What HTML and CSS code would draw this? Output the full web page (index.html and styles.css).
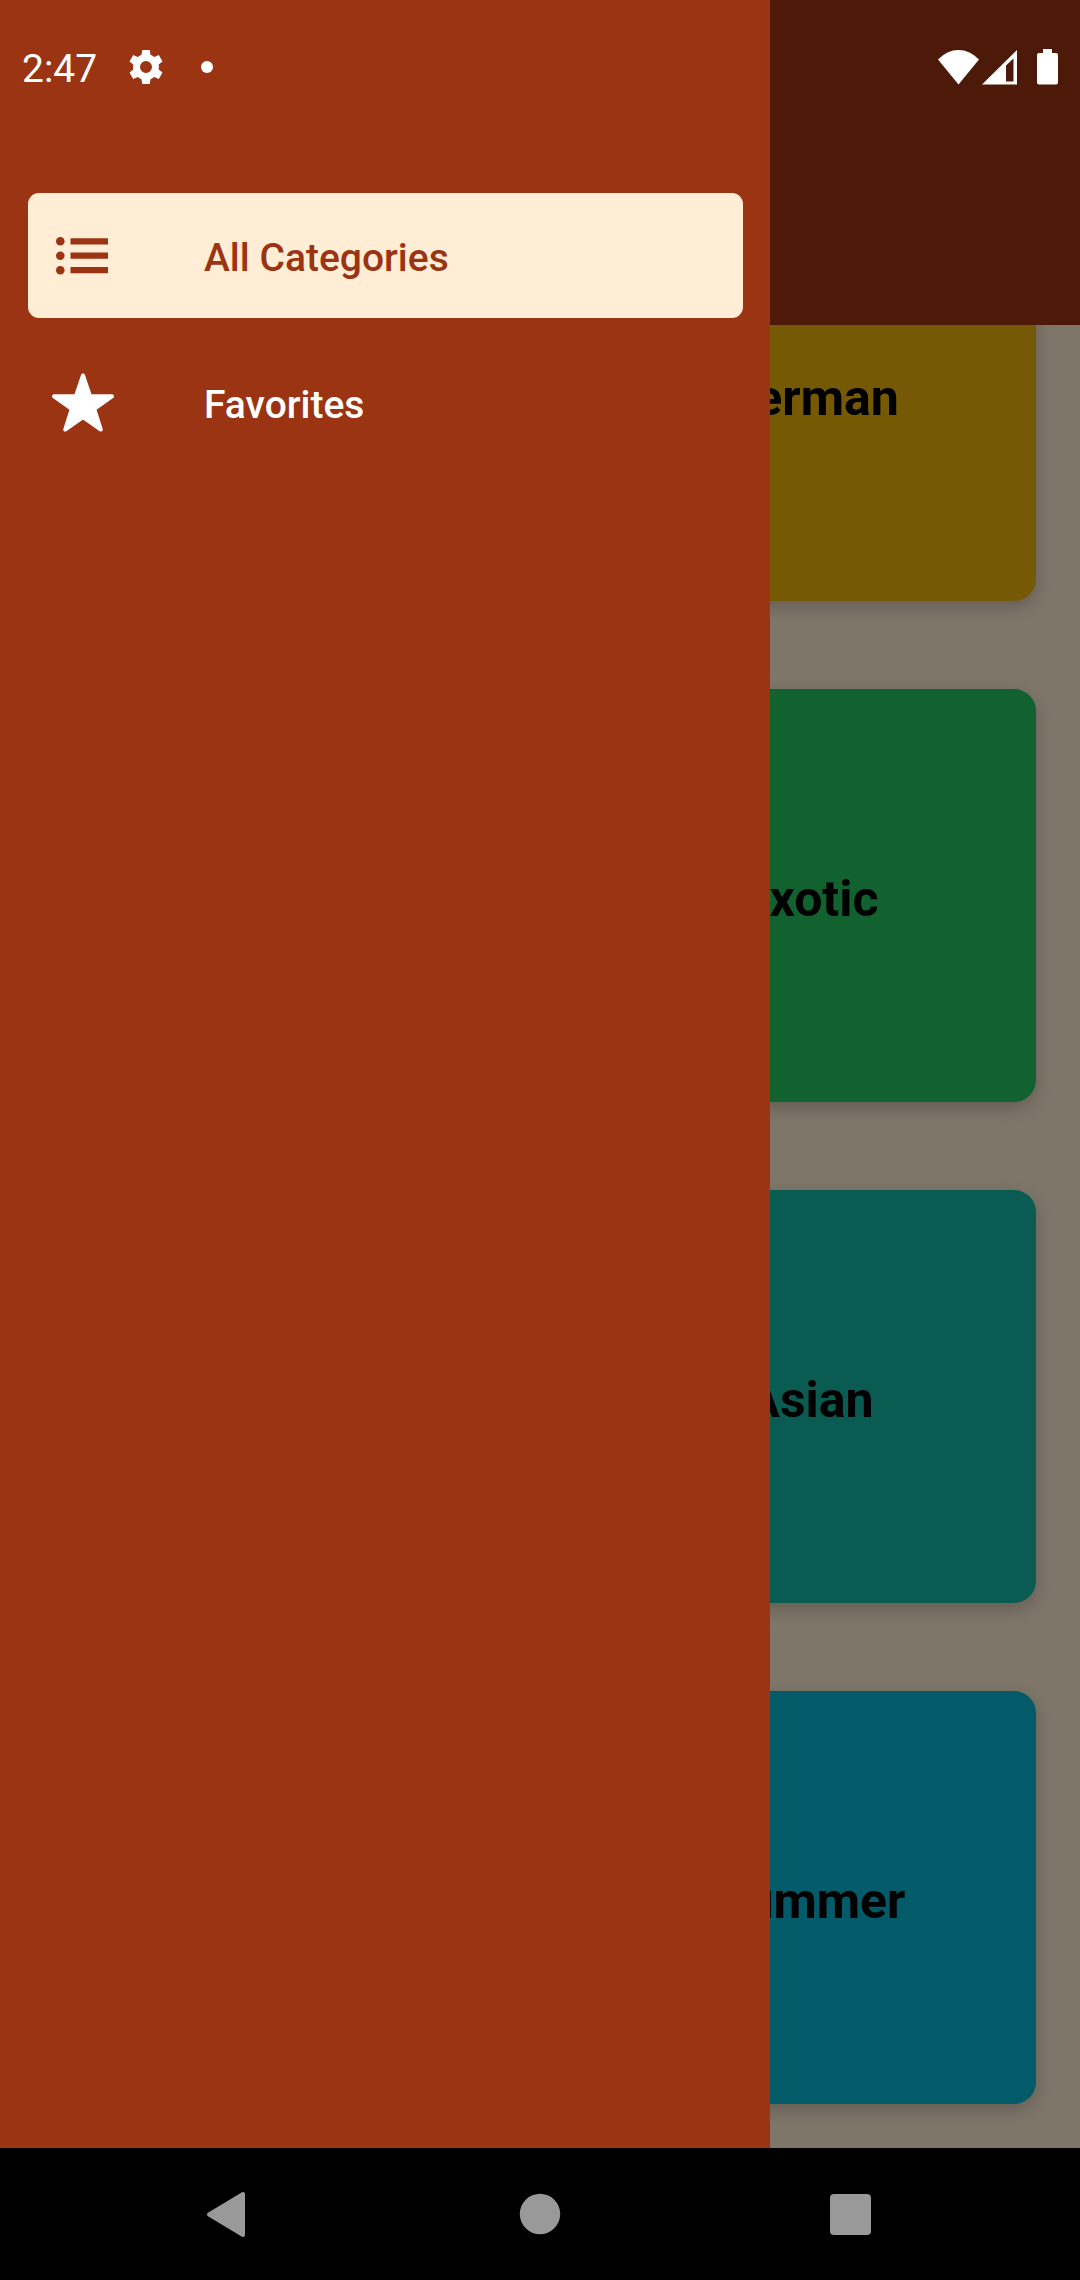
FILE: index.html
```html
<!DOCTYPE html>
<html lang="en">
<head>
<meta charset="utf-8">
<meta name="viewport" content="width=device-width, initial-scale=1">
<title>All Categories</title>
<link rel="stylesheet" href="styles.css">
</head>
<body>
<div class="screen">
  <div class="stage">
    <div class="app">
      <header class="app-header"></header>
      <main class="categories">
        <a class="card card-yellow" href="#german">German</a>
        <a class="card card-green" href="#exotic">Exotic</a>
        <a class="card card-teal" href="#asian">Asian</a>
        <a class="card card-cyan" href="#summer">Summer</a>
      </main>
    </div>
    <div class="scrim"></div>
    <nav class="drawer">
      <a class="drawer-item active" href="#categories">
        <svg class="drawer-icon" viewBox="0 0 66 66" aria-hidden="true">
          <g fill="currentColor">
            <circle cx="10.300" cy="18.300" r="4.300"/><circle cx="10.300" cy="32.700" r="4.300"/><circle cx="10.300" cy="47.200" r="4.300"/>
            <path d="M20.500 15.200H58v6.200H20.500zM20.500 29.600H58v6.200H20.500zM20.500 44.100H58v6.200H20.500z"/>
          </g>
        </svg>
        <span class="drawer-label">All Categories</span>
      </a>
      <a class="drawer-item" href="#favorites">
        <svg class="drawer-icon" viewBox="0 0 66 66" aria-hidden="true">
          <path fill="currentColor" stroke="currentColor" stroke-width="4" stroke-linejoin="round" d="M33 5.500L40.100 26.300H62L44.300 39L50.800 59.500L33 47L15.200 59.500L21.700 39L4 26.300H25.900Z"/>
        </svg>
        <span class="drawer-label">Favorites</span>
      </a>
    </nav>
    <div class="status-bar">
      <span class="clock">2:47</span>
      <svg class="gear" viewBox="0 0 34 34" aria-label="Settings">
        <path fill="#fff" fill-rule="evenodd" d="M13.300 0H20.700L21.500 4.800A13 13 0 0 1 25.200 6.900L29.800 5.100L33.500 11.500L29.700 14.600A13 13 0 0 1 29.700 19.400L33.500 22.500L29.800 28.900L25.200 27.100A13 13 0 0 1 21.500 29.200L20.700 34H13.300L12.500 29.200A13 13 0 0 1 8.800 27.100L4.200 28.900L.5 22.500L4.300 19.400A13 13 0 0 1 4.300 14.600L.5 11.500L4.200 5.100L8.800 6.900A13 13 0 0 1 12.500 4.800ZM17 11A6 6 0 1 0 17 23A6 6 0 1 0 17 11Z"/>
      </svg>
      <span class="dot"></span>
      <div class="signals">
        <svg class="wifi" viewBox="0 0 41 35" aria-label="Wi-Fi"><path fill="#fff" d="M0 9.500Q9 0 20.500 0T41 9.500L20.500 34.500Z"/></svg>
        <svg class="cell" viewBox="0 0 35 35" aria-label="Mobile signal"><path fill="#fff" fill-rule="evenodd" d="M35 0V34.500H0ZM24 15.500V31.500H31.500V8.500Z"/></svg>
        <svg class="battery" viewBox="0 0 21 36" aria-label="Battery"><path fill="#fff" d="M6 0H15V4H19Q21 4 21 6V33.500Q21 35.500 19 35.500H2Q0 35.500 0 33.500V6Q0 4 2 4H6Z"/></svg>
      </div>
    </div>
  </div>
  <div class="system-nav">
    <button class="system-button" type="button" aria-label="Back">
      <svg class="system-icon" viewBox="0 0 48 48"><path fill="#999" stroke="#999" stroke-width="4" stroke-linejoin="round" d="M4 24.500L38 4V45Z"/></svg>
    </button>
    <button class="system-button" type="button" aria-label="Home">
      <svg class="system-icon" viewBox="0 0 48 48"><circle cx="24" cy="24" r="20.200" fill="#999"/></svg>
    </button>
    <button class="system-button" type="button" aria-label="Recents">
      <svg class="system-icon" viewBox="0 0 48 48"><rect x="3" y="4" width="41" height="41" rx="4" fill="#999"/></svg>
    </button>
  </div>
</div>
</body>
</html>
```
FILE: styles.css
```css
* {
  box-sizing: border-box;
}

body {
  margin: 0;
  font-family: Roboto, "Liberation Sans", sans-serif;
  background: #000;
}

.screen {
  display: flex;
  flex-direction: column;
  height: 100vh;
}

.stage {
  position: relative;
  flex: 1;
  min-height: 0;
  overflow: hidden;
}

.app {
  display: flex;
  flex-direction: column;
  height: 100%;
  background: #ffedd5;
}

.app-header {
  flex: none;
  height: 325px;
  background: #9a3412;
}

/* Two-column list, scrolled to its end */
.categories {
  flex: 1;
  min-height: 0;
  display: grid;
  grid-template-columns: 1fr 1fr;
  grid-auto-rows: 413px;
  row-gap: 88px;
  align-content: end;
  padding-bottom: 44px;
  overflow: hidden;
}

.card {
  grid-column: 2;
  margin: 0 44px;
  padding-top: 6px;
  display: flex;
  align-items: center;
  justify-content: center;
  border-radius: 22px;
  box-shadow: 0 6px 18px rgba(0, 0, 0, 0.22);
  color: #000;
  font-size: 50px;
  font-weight: 700;
  text-decoration: none;
}

.card-yellow { background: #eab308; }
.card-green { background: #22c55e; }
.card-teal { background: #14b8a6; }
.card-cyan { background: #06b6d4; }

.scrim {
  position: absolute;
  inset: 0;
  background: rgba(0, 0, 0, 0.5);
}

.drawer {
  position: absolute;
  top: 0;
  bottom: 0;
  left: 0;
  width: 770px;
  max-width: 80%;
  padding: 193px 27px 0 28px;
  display: flex;
  flex-direction: column;
  gap: 22px;
  background: #9a3412;
}

.drawer-item {
  display: flex;
  align-items: center;
  gap: 88px;
  height: 125px;
  padding: 0 22px;
  border-radius: 11px;
  color: #fff;
  font-size: 39px;
  font-weight: 500;
  text-decoration: none;
}

.drawer-item.active {
  background: #ffedd5;
  color: #9a3412;
}

.drawer-label {
  padding-top: 4px;
}

.drawer-icon {
  flex: none;
  width: 66px;
  height: 66px;
}

.status-bar {
  position: absolute;
  top: 0;
  left: 0;
  right: 0;
  height: 134px;
  padding: 0 22px;
  display: flex;
  align-items: center;
  color: #fff;
}

.clock {
  padding-top: 4px;
  font-size: 39px;
}

.gear {
  width: 34px;
  height: 34px;
  margin-left: 32px;
}

.dot {
  width: 12px;
  height: 12px;
  margin-left: 38px;
  border-radius: 50%;
  background: #fff;
}

.signals {
  margin-left: auto;
  display: flex;
  align-items: center;
}

.wifi {
  width: 41px;
  height: 35px;
}

.cell {
  width: 35px;
  height: 35px;
  margin-left: 3px;
}

.battery {
  width: 21px;
  height: 36px;
  margin-left: 20px;
}

.system-nav {
  flex: none;
  display: flex;
  justify-content: center;
  align-items: center;
  gap: 191px;
  height: 132px;
  background: #000;
}

.system-button {
  display: flex;
  align-items: center;
  justify-content: center;
  width: 120px;
  height: 120px;
  padding: 0;
  border: 0;
  background: none;
}

.system-icon {
  width: 48px;
  height: 48px;
}
```
